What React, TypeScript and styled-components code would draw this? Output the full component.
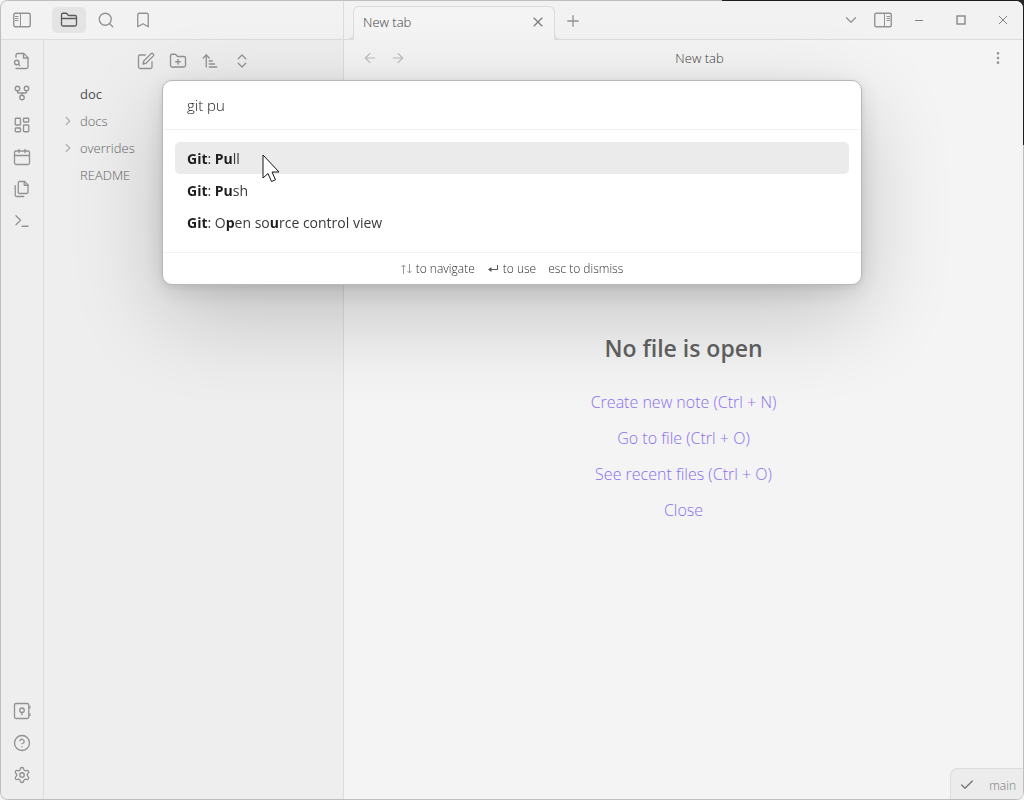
import React, { useState } from "react";
import styled, { createGlobalStyle, css } from "styled-components";
import {
  ArrowLeft,
  ArrowRight,
  ArrowUpNarrowWide,
  Bookmark,
  Check,
  ChevronDown,
  ChevronRight,
  ChevronsUpDown,
  CircleQuestionMark,
  EllipsisVertical,
  FolderClosed,
  FolderPlus,
  GitFork,
  LayoutDashboard,
  Plus,
  Search,
  Settings,
  X,
} from "lucide-react";

const color = {
  ribbon: "#eeeeee",
  bar: "#f2f2f2",
  pane: "#f4f4f4",
  line: "#dcdcdc",
  icon: "#929292",
  faint: "#bcbcbc",
  text: "#404040",
  muted: "#666666",
  accent: "#8a70ee",
};

const GlobalStyle = createGlobalStyle`
  *, *::before, *::after { box-sizing: border-box; }
  body {
    margin: 0;
    font-family: "Open Sans", "Noto Sans", sans-serif;
    font-size: 13px;
    font-weight: 300;
    color: ${color.text};
  }
  ul { list-style: none; margin: 0; padding: 0; }
`;

const Desktop = styled.div`
  min-height: 100vh;
  display: flex;
  background: linear-gradient(#262628, #262628) top right / 302px 145px no-repeat, #f4f4f4;
`;

const Window = styled.div`
  flex: 1;
  min-width: 0;
  display: flex;
  flex-direction: column;
  border: 1px solid rgba(0, 0, 0, 0.22);
  border-radius: 8px;
  background: ${color.pane};
  background-clip: padding-box;
  overflow: hidden;
`;

const TitleBar = styled.header`
  display: flex;
  height: 39px;
  background: ${color.bar};
`;

const IconButton = styled.button<{ $w?: number; $h?: number; $active?: boolean; $tone?: string }>`
  display: flex;
  align-items: center;
  justify-content: center;
  flex: none;
  width: ${(p) => p.$w ?? 32}px;
  height: ${(p) => p.$h ?? 26}px;
  padding: 0;
  border: 0;
  border-radius: 5px;
  background: ${(p) => (p.$active ? "#e4e4e4" : "transparent")};
  color: ${(p) => p.$tone ?? (p.$active ? "#5a5a5a" : color.icon)};
  svg { display: block; }
`;

const LeftTabs = styled.div`
  width: 343px;
  flex: none;
  display: flex;
  align-items: center;
  padding-left: 5px;
  border-right: 1px solid ${color.line};
  border-bottom: 1px solid ${color.line};
`;

const PanelTabs = styled.div`
  display: flex;
  gap: 3px;
  margin-left: 14px;
`;

const TabStrip = styled.div`
  flex: 1;
  display: flex;
  align-items: flex-start;
  min-width: 0;
  padding: 5px 0 0 9px;
  border-bottom: 1px solid ${color.line};
`;

const foot = css`
  content: "";
  position: absolute;
  bottom: 0;
  width: 6px;
  height: 6px;
  border-bottom: 1px solid ${color.line};
  background: ${color.bar};
`;

const Tab = styled.div`
  position: relative;
  display: flex;
  align-items: center;
  width: 202px;
  height: 34px;
  padding: 0 6px 4px 9px;
  border: 1px solid ${color.line};
  border-bottom: 0;
  border-radius: 6px 6px 0 0;
  background: ${color.pane};
  &::before { ${foot} left: -6px; border-right: 1px solid ${color.line}; border-bottom-right-radius: 6px; }
  &::after { ${foot} right: -6px; border-left: 1px solid ${color.line}; border-bottom-left-radius: 6px; }
`;

const TabTitle = styled.span`
  flex: 1;
`;

const WindowControls = styled.div`
  display: flex;
  align-items: center;
  height: 28px;
  margin-left: auto;
`;

const Body = styled.div`
  flex: 1;
  display: flex;
`;

const Ribbon = styled.nav`
  width: 43px;
  flex: none;
  display: flex;
  flex-direction: column;
  align-items: center;
  gap: 6px;
  padding: 8px 0 11px;
  background: ${color.ribbon};
  border-right: 1px solid ${color.line};
`;

const Spacer = styled.div`
  flex: 1;
`;

const Sidebar = styled.aside`
  width: 300px;
  flex: none;
  background: ${color.ribbon};
  border-right: 1px solid ${color.line};
`;

const SidebarTools = styled.div`
  display: flex;
  justify-content: center;
  padding: 8px 0 6px;
`;

const Tree = styled.ul`
  && { padding: 0 12px 0 15px; }
`;

const TreeRow = styled.button<{ $root?: boolean }>`
  display: flex;
  align-items: center;
  width: 100%;
  height: 27px;
  padding: 0;
  border: 0;
  background: none;
  text-align: left;
  font-family: inherit;
  font-size: 13px;
  color: ${(p) => (p.$root ? "#505050" : color.muted)};
  font-weight: ${(p) => (p.$root ? 400 : 300)};
`;

const TreeArrow = styled.span`
  display: flex;
  width: 21px;
  padding-left: 2px;
  color: #b4b4b4;
`;

const Pane = styled.main`
  flex: 1;
  min-width: 0;
  display: flex;
  flex-direction: column;
  background: ${color.pane};
`;

const ViewHeader = styled.div`
  display: flex;
  align-items: center;
  height: 36px;
  padding: 0 12px;
`;

const NavGroup = styled.div`
  display: flex;
  margin-right: 2px;
`;

const ViewTitle = styled.div`
  flex: 1;
  text-align: center;
`;

const EmptyState = styled.section`
  flex: 1;
  display: flex;
  flex-direction: column;
  align-items: center;
  padding-top: 256px;
`;

const EmptyTitle = styled.h2`
  margin: 0 0 20px;
  font-size: 23px;
  line-height: 32px;
  font-weight: 600;
  color: #626262;
`;

const ActionLink = styled.a`
  font-size: 16px;
  line-height: 36px;
  color: ${color.accent};
  text-decoration: none;
`;

const StatusBar = styled.footer`
  align-self: flex-end;
  display: flex;
  align-items: center;
  justify-content: space-between;
  width: 73px;
  height: 31px;
  padding: 2px 7px 0 8px;
  border: 1px solid ${color.line};
  border-width: 1px 0 0 1px;
  border-radius: 8px 0 0 0;
  background: #ececec;
  color: #767676;
  font-size: 12px;
`;

const Overlay = styled.div`
  position: fixed;
  inset: 0;
  display: flex;
  justify-content: center;
  align-items: flex-start;
  padding: 80px 16px 0;
`;

const Prompt = styled.div`
  width: 100%;
  max-width: 700px;
  border: 1px solid #b8b8b8;
  border-radius: 10px;
  background: #fff;
  box-shadow: 0 2px 7px rgba(0, 0, 0, 0.07), 0 6px 25px rgba(0, 0, 0, 0.11), 0 30px 90px rgba(0, 0, 0, 0.2);
  color: #1c1c1c;
  overflow: hidden;
`;

const PromptInput = styled.input`
  display: block;
  width: 100%;
  height: 49px;
  padding: 0 24px;
  border: 0;
  border-bottom: 1px solid #f2f2f2;
  outline: 0;
  background: none;
  color: inherit;
  font-family: inherit;
  font-size: 15px;
  font-weight: 300;
`;

const Results = styled.ul`
  && { padding: 12px 12px 14px; }
`;

const Result = styled.button<{ $selected?: boolean }>`
  display: block;
  width: 100%;
  height: 32px;
  padding: 0 12px;
  border: 0;
  border-radius: 5px;
  background: ${(p) => (p.$selected ? "#ebebeb" : "transparent")};
  color: #3a3a3a;
  font-family: inherit;
  font-size: 14px;
  font-weight: 400;
  text-align: left;
  b { font-weight: 700; color: #1e1e1e; }
`;

const Hints = styled.div`
  display: flex;
  justify-content: center;
  gap: 12px;
  height: 32px;
  line-height: 30px;
  border-top: 1px solid #f2f2f2;
  font-size: 12px;
  color: #303030;
`;

const Hint = styled.span`
  display: flex;
  align-items: center;
  gap: 4px;
  svg { display: block; }
`;

const Pointer = styled.svg`
  position: fixed;
  left: 262px;
  top: 154px;
  pointer-events: none;
`;

type GlyphProps = { children: React.ReactNode; size?: number };

const Glyph = ({ children, size = 18 }: GlyphProps) => (
  <svg width={size} height={size} viewBox="0 0 24 24" fill="none" stroke="currentColor" strokeWidth={1.75} strokeLinecap="round" strokeLinejoin="round">
    {children}
  </svg>
);

const SidebarGlyph = ({ flip }: { flip?: boolean }) => (
  <svg width="18" height="16" viewBox="0 0 18 16" fill="none" stroke="currentColor">
    <rect x="0.75" y="1.25" width="16.5" height="13.5" rx="1.5" strokeWidth="1.4" />
    {flip ? (
      <path d="M10.5 1.5v13M12.5 4.5h3.5M12.5 6.5h3.5M12.5 8.5h3.5" />
    ) : (
      <path d="M7.5 1.5v13M2 4.5h3.5M2 6.5h3.5M2 8.5h3.5" />
    )}
  </svg>
);

const icon = { size: 18, strokeWidth: 1.75 };

const ribbonTop = [
  {
    label: "Open quick switcher",
    glyph: (
      <Glyph>
        <path d="M4 22h14a2 2 0 0 0 2-2V7.5L14.5 2H6a2 2 0 0 0-2 2v3" />
        <path d="M14 2v6h6" />
        <circle cx="5" cy="14" r="3" />
        <path d="m9 18-1.5-1.5" />
      </Glyph>
    ),
  },
  { label: "Open graph view", glyph: <GitFork {...icon} /> },
  { label: "Create new canvas", glyph: <LayoutDashboard {...icon} /> },
  {
    label: "Open today's daily note",
    glyph: (
      <Glyph>
        <rect x="2" y="4" width="20" height="18" rx="2" />
        <path d="M16 2v4M8 2v4M2 10h20" />
      </Glyph>
    ),
  },
  {
    label: "Insert template",
    glyph: (
      <Glyph>
        <path d="M15.5 2H8.6c-.4 0-.8.2-1.1.5-.3.3-.5.7-.5 1.1v12.8c0 .4.2.8.5 1.1.3.3.7.5 1.1.5h9.8c.4 0 .8-.2 1.1-.5.3-.3.5-.7.5-1.1V6.5L15.5 2z" />
        <path d="M3 7.6v12.8c0 .4.2.8.5 1.1.3.3.7.5 1.1.5h9.8" />
        <path d="M15 2v5h5" />
      </Glyph>
    ),
  },
  {
    label: "Open command palette",
    glyph: (
      <Glyph>
        <path d="m4 17 6-6-6-6M12 19h8" />
      </Glyph>
    ),
  },
];

const ribbonBottom = [
  {
    label: "Open another vault",
    glyph: (
      <Glyph>
        <rect x="2" y="2" width="19" height="20" rx="2" />
        <circle cx="12" cy="11" r="3" />
        <path d="M12 14v3M22.5 6v2M22.5 16v2" />
      </Glyph>
    ),
  },
  { label: "Help", glyph: <CircleQuestionMark {...icon} /> },
  { label: "Settings", glyph: <Settings {...icon} /> },
];

const files = [
  { name: "docs", folder: true },
  { name: "overrides", folder: true },
  { name: "README", folder: false },
];

const actions = ["Create new note (Ctrl + N)", "Go to file (Ctrl + O)", "See recent files (Ctrl + O)", "Close"];

export default function App() {
  const [query, setQuery] = useState("git pu");

  return (
    <>
      <GlobalStyle />
      <Desktop>
        <Window>
          <TitleBar>
            <LeftTabs>
              <IconButton aria-label="Toggle left sidebar"><SidebarGlyph /></IconButton>
              <PanelTabs>
                <IconButton aria-label="Files" $w={34} $active><FolderClosed {...icon} /></IconButton>
                <IconButton aria-label="Search" $w={34}><Search {...icon} /></IconButton>
                <IconButton aria-label="Bookmarks" $w={34}><Bookmark {...icon} /></IconButton>
              </PanelTabs>
            </LeftTabs>
            <TabStrip>
              <Tab>
                <TabTitle>New tab</TabTitle>
                <IconButton aria-label="Close tab" $w={20} $tone="#7c7c7c"><X size={16} strokeWidth={1.75} /></IconButton>
              </Tab>
              <IconButton aria-label="New tab" $w={36} $h={30}><Plus {...icon} /></IconButton>
              <WindowControls>
                <IconButton aria-label="Tab list"><ChevronDown {...icon} /></IconButton>
                <IconButton aria-label="Toggle right sidebar"><SidebarGlyph flip /></IconButton>
                <IconButton aria-label="Minimize" $w={40} $tone="#808080">
                  <svg width="10" height="10" viewBox="0 0 10 10" stroke="currentColor"><path d="M1 5.5h8" /></svg>
                </IconButton>
                <IconButton aria-label="Maximize" $w={44} $tone="#808080">
                  <svg width="10" height="10" viewBox="0 0 10 10" fill="none" stroke="currentColor"><rect x="1" y="1" width="8" height="8" strokeWidth="1.3" /></svg>
                </IconButton>
                <IconButton aria-label="Close window" $w={40} $tone="#808080">
                  <svg width="10" height="10" viewBox="0 0 10 10" stroke="currentColor"><path d="m1 1 8 8M9 1 1 9" /></svg>
                </IconButton>
              </WindowControls>
            </TabStrip>
          </TitleBar>

          <Body>
            <Ribbon>
              {ribbonTop.map((item) => (
                <IconButton key={item.label} aria-label={item.label}>{item.glyph}</IconButton>
              ))}
              <Spacer />
              {ribbonBottom.map((item) => (
                <IconButton key={item.label} aria-label={item.label}>{item.glyph}</IconButton>
              ))}
            </Ribbon>

            <Sidebar>
              <SidebarTools>
                <IconButton aria-label="New note">
                  <Glyph>
                    <path d="M11 4H4a2 2 0 0 0-2 2v14a2 2 0 0 0 2 2h14a2 2 0 0 0 2-2v-7" />
                    <path d="M18.5 2.5a2.12 2.12 0 0 1 3 3L12 15l-4 1 1-4z" />
                  </Glyph>
                </IconButton>
                <IconButton aria-label="New folder"><FolderPlus {...icon} /></IconButton>
                <IconButton aria-label="Change sort order"><ArrowUpNarrowWide {...icon} /></IconButton>
                <IconButton aria-label="Expand all"><ChevronsUpDown {...icon} /></IconButton>
              </SidebarTools>
              <Tree>
                <li><TreeRow $root><TreeArrow />doc</TreeRow></li>
                {files.map((file) => (
                  <li key={file.name}>
                    <TreeRow>
                      <TreeArrow>{file.folder && <ChevronRight size={14} strokeWidth={2.5} />}</TreeArrow>
                      {file.name}
                    </TreeRow>
                  </li>
                ))}
              </Tree>
            </Sidebar>

            <Pane>
              <ViewHeader>
                <NavGroup>
                  <IconButton aria-label="Back" $w={28} $tone={color.faint}><ArrowLeft size={16} strokeWidth={1.75} /></IconButton>
                  <IconButton aria-label="Forward" $w={28} $tone={color.faint}><ArrowRight size={16} strokeWidth={1.75} /></IconButton>
                </NavGroup>
                <ViewTitle>New tab</ViewTitle>
                <IconButton aria-label="More options" $w={26}><EllipsisVertical size={16} strokeWidth={2} /></IconButton>
              </ViewHeader>
              <EmptyState>
                <EmptyTitle>No file is open</EmptyTitle>
                {actions.map((action) => (
                  <ActionLink key={action} href="#">{action}</ActionLink>
                ))}
              </EmptyState>
              <StatusBar>
                <Check size={16} strokeWidth={2} />
                <span>main</span>
              </StatusBar>
            </Pane>
          </Body>
        </Window>
      </Desktop>

      <Overlay>
        <Prompt role="dialog" aria-label="Command palette">
          <PromptInput aria-label="Command" value={query} onChange={(e) => setQuery(e.target.value)} />
          <Results>
            <li><Result $selected><b>Git</b>: <b>Pu</b>ll</Result></li>
            <li><Result><b>Git</b>: <b>Pu</b>sh</Result></li>
            <li><Result><b>Git</b>: O<b>p</b>en so<b>u</b>rce control view</Result></li>
          </Results>
          <Hints>
            <Hint>
              <svg width="11" height="10" viewBox="0 0 11 10" fill="none" stroke="#999"><path d="M2.5 10V1M.5 3l2-2 2 2M8.500 0v9M6.500 7l2 2 2-2" /></svg>
              to navigate
            </Hint>
            <Hint>
              <svg width="12" height="10" viewBox="0 0 12 10" fill="none" stroke="#555"><path d="M10.500 1v4.500H2" /><path d="M4.500 3v5L1 5.500z" fill="#555" stroke="none" /></svg>
              to use
            </Hint>
            <Hint>esc to dismiss</Hint>
          </Hints>
        </Prompt>
      </Overlay>

      <Pointer width="19" height="29" viewBox="0 0 19 29">
        <path d="M1 1v23l5-4.500 3.500 8 4-1.700-3.500-7.800h7z" fill="#fff" stroke="#15151f" />
      </Pointer>
    </>
  );
}
